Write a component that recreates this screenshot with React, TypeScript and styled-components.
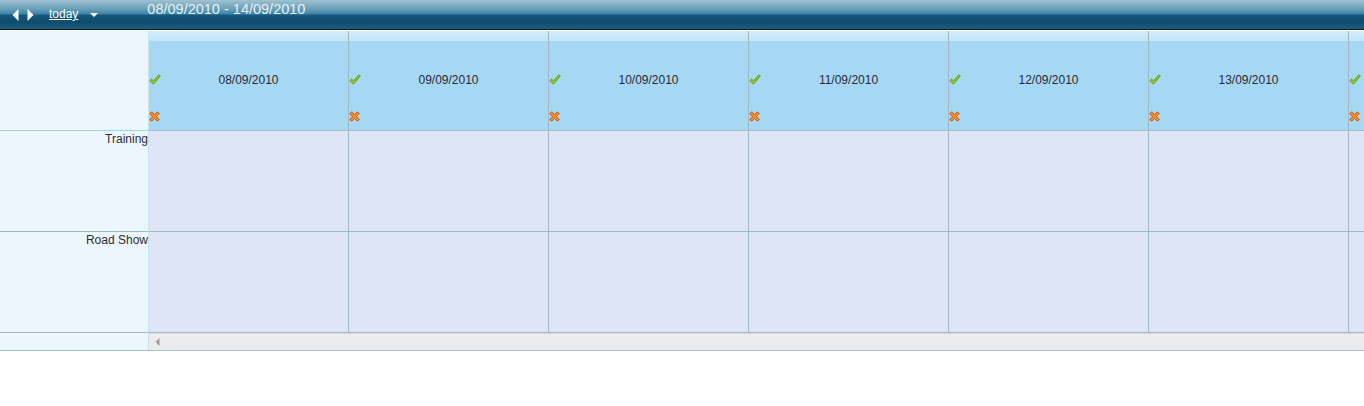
import styled, {createGlobalStyle} from "styled-components";

const GlobalStyle = createGlobalStyle`
  html, body {
    margin: 0;
    padding: 0;
    background: #ffffff;
  }
  body {
    font-family: "Liberation Sans", "DejaVu Sans", sans-serif;
  }
  svg {
    display: block;
  }
`;

const days = ['08/09/2010', '09/09/2010', '10/09/2010', '11/09/2010', '12/09/2010', '13/09/2010', '14/09/2010'];
const resources = ['Training', 'Road Show'];

const Toolbar = styled.div`
  height: 29px;
  display: flex;
  align-items: flex-start;
  background: linear-gradient(to bottom, #9fc1d0 0%, #6aa0ba 30%, #3f84a6 48%, #145a80 52%, #0f4b6c 75%, #1f5c7d 100%);
  border-bottom: 1px solid #0c1c26;
  box-shadow: 0 1px 0 #ffffff;
  margin-bottom: 1px;
`;

const NavArrows = styled.div`
  display: flex;
  gap: 8px;
  padding: 9px 0 0 12px;
  width: 37px;
`;

const TodayLink = styled.a`
  margin-top: 7px;
  font-size: 12px;
  color: #ffffff;
  text-decoration: underline;
`;

const Dropdown = styled.div`
  margin: 13px 0 0 12px;
  width: 0;
  height: 0;
  border-left: 4px solid transparent;
  border-right: 4px solid transparent;
  border-top: 4px solid #ffffff;
`;

const RangeTitle = styled.div`
  margin: 1px 0 0 49px;
  font-size: 14.5px;
  color: #e6f1f6;
`;

const Body = styled.div`
  display: flex;
  border-bottom: 1px solid #a3c3d3;
`;

const LeftPane = styled.div`
  width: 148px;
  flex: none;
  background: #eef6fd;
  border-right: 1px solid #c6e3f3;
`;

const Corner = styled.div`
  height: 99px;
  border-bottom: 1px solid #9cd6f1;
`;

const RowLabel = styled.div`
  height: 99px;
  padding-top: 1px;
  border-bottom: 1px solid #a4b7c5;
  text-align: right;
  font-size: 12px;
  color: #2c2c3c;
`;

const LeftScrollGap = styled.div`
  height: 17px;
`;

const RightPane = styled.div`
  flex: 1;
  overflow: hidden;
  min-width: 0;
`;

const GridRow = styled.div<{$header?: boolean; $height: number}>`
  display: flex;
  height: ${p => p.$height}px;
  border-bottom: 1px solid ${p => p.$header ? '#a9bbc8' : '#a4b7c5'};
  background: ${p => p.$header
    ? 'linear-gradient(to bottom, #d4eefb 0px, #c0e5f8 10px, #a6d8f3 10px)'
    : '#dee5f4'};
`;

const DayCell = styled.div`
  flex: none;
  width: 199px;
  border-right: 1px solid #a3b6c3;
  position: relative;
`;

const DateLabel = styled.div`
  position: absolute;
  left: 0;
  right: 0;
  top: 42px;
  text-align: center;
  font-size: 12px;
  color: #2a2a3a;
`;

const IconSlot = styled.div<{$top: number}>`
  position: absolute;
  left: 0;
  top: ${p => p.$top}px;
`;

const ScrollBar = styled.div`
  height: 17px;
  background: #ececec;
  border-top: 1px solid #dcdcdc;
  box-sizing: border-box;
  display: flex;
  align-items: center;
  padding-left: 6px;
`;

const ArrowLeft = () => (
  <svg width="7" height="12" viewBox="0 0 7 12">
    <path d="M6.5 0 L0.5 6 L6.5 12 Z" fill="#ffffff" />
  </svg>
);

const ArrowRight = () => (
  <svg width="7" height="12" viewBox="0 0 7 12">
    <path d="M0.5 0 L6.5 6 L0.5 12 Z" fill="#ffffff" />
  </svg>
);

const CheckIcon = () => (
  <svg width="12" height="12" viewBox="0 0 12 12">
    <path d="M0.8 6.6 L2.6 5 L4.4 6.8 L9.8 0.8 L11.4 2.2 L4.4 10.2 Z" fill="#8cc630" stroke="#5f9a1c" strokeWidth="0.9" strokeLinejoin="round" />
  </svg>
);

const CrossIcon = () => (
  <svg width="11" height="11" viewBox="0 0 11 11">
    <path d="M0.8 2.6 L2.6 0.8 L5.5 3.7 L8.4 0.8 L10.2 2.6 L7.3 5.5 L10.2 8.4 L8.4 10.2 L5.5 7.3 L2.6 10.2 L0.8 8.4 L3.7 5.5 Z" fill="#f7931e" stroke="#c8470a" strokeWidth="0.9" strokeLinejoin="round" />
  </svg>
);

const ScrollArrow = () => (
  <svg width="5" height="8" viewBox="0 0 5 8">
    <path d="M4.5 0 L0.5 4 L4.5 8 Z" fill="#9a9a9a" />
  </svg>
);

export default function App() {
  return (
    <>
      <GlobalStyle />
      <Toolbar>
        <NavArrows>
          <ArrowLeft />
          <ArrowRight />
        </NavArrows>
        <TodayLink>today</TodayLink>
        <Dropdown />
        <RangeTitle>08/09/2010 - 14/09/2010</RangeTitle>
      </Toolbar>
      <Body>
        <LeftPane>
          <Corner />
          {resources.map(r => <RowLabel key={r}>{r}</RowLabel>)}
          <LeftScrollGap />
        </LeftPane>
        <RightPane>
          <GridRow $header $height={99}>
            {days.map(d => (
              <DayCell key={d}>
                <IconSlot $top={43}><CheckIcon /></IconSlot>
                <DateLabel>{d}</DateLabel>
                <IconSlot $top={80}><CrossIcon /></IconSlot>
              </DayCell>
            ))}
          </GridRow>
          {resources.map(r => (
            <GridRow key={r} $height={100}>
              {days.map(d => <DayCell key={d} />)}
            </GridRow>
          ))}
          <ScrollBar>
            <ScrollArrow />
          </ScrollBar>
        </RightPane>
      </Body>
    </>
  );
}
